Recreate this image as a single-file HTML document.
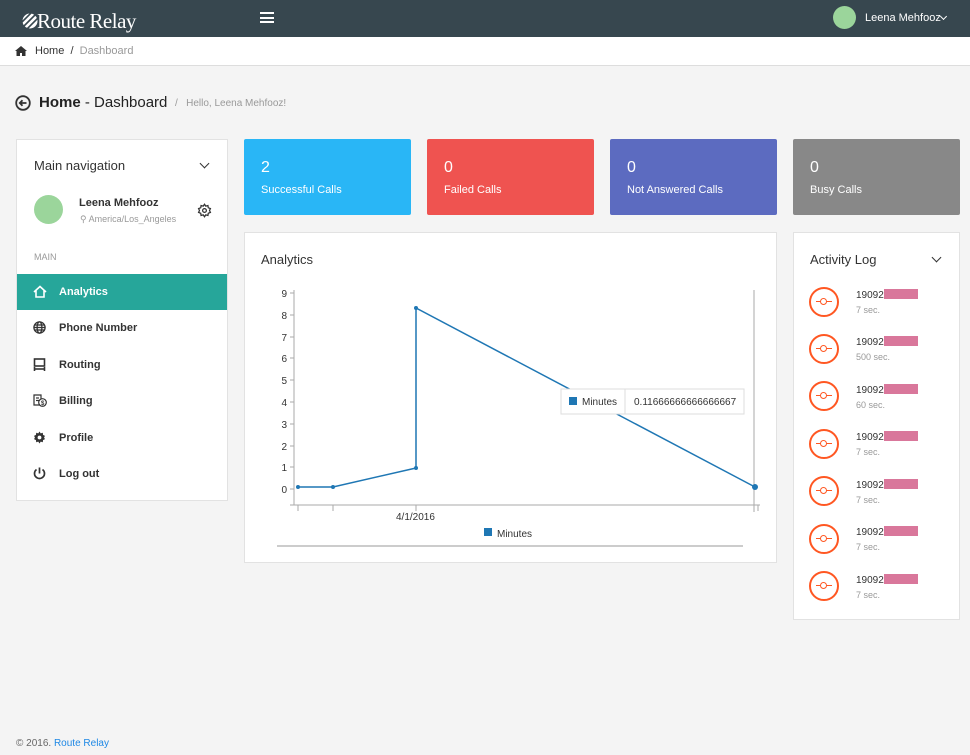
<!DOCTYPE html>
<html><head><meta charset="utf-8"><style>
*{box-sizing:border-box;margin:0;padding:0}
body{width:970px;height:755px;background:#f4f4f4;font-family:"Liberation Sans",sans-serif;position:relative;overflow:hidden;color:#333}
.a{position:absolute}
.top{left:0;top:0;width:970px;height:37px;background:#37474f}
.bc{left:0;top:37px;width:970px;height:29px;background:#fff;border-bottom:1px solid #ddd;font-size:11px}
.card{background:#fff;border:1px solid #e2e2e2}
.stat{color:#fff;border-radius:2px}
.stat .n{position:absolute;left:17px;top:20px;font-size:16px}
.stat .l{position:absolute;left:17px;top:45px;font-size:11px}
.nav{font-size:11px;font-weight:bold;color:#333}
.item{position:absolute;left:0;width:210px;height:36px;line-height:36px;padding-left:42px}
.ic{position:absolute;left:16px;top:11px}
.act .c{position:absolute;left:15px;width:30px;height:30px;border:2px solid #ff5722;border-radius:50%}
.act .c:before{content:"";position:absolute;left:5px;top:11.5px;width:16px;height:1.5px;background:#ff5722}
.act .c:after{content:"";position:absolute;left:9px;top:8.5px;width:5px;height:5px;border:1.5px solid #ff5722;border-radius:50%;background:#fff}
.chev{position:absolute;width:7px;height:7px;border-right:1.6px solid #333;border-bottom:1.6px solid #333;transform:rotate(45deg)}
</style></head><body>
<div class="a top">
 <svg class="a" style="left:22px;top:13px" width="16" height="16" viewBox="0 0 16 16"><circle cx="8" cy="8" r="7.5" fill="#fff"/><g stroke="#37474f" stroke-width="1.6"><line x1="0" y1="9" x2="9" y2="0"/><line x1="2" y1="13" x2="13" y2="2"/><line x1="5" y1="16" x2="16" y2="5"/></g></svg>
 <div class="a" style="left:37px;top:9px;color:#fff;font-family:'Liberation Serif',serif;font-size:21px;letter-spacing:-0.5px">Route Relay</div>
 <div class="a" style="left:260px;top:12px;width:14px;height:11px;border-top:2px solid #fff;border-bottom:2px solid #fff"><div style="margin-top:2.5px;height:2px;background:#fff"></div></div>
 <div class="a" style="left:833px;top:6px;width:23px;height:23px;border-radius:50%;background:#9bd59b"></div>
 <div class="a" style="left:865px;top:12px;color:#fff;font-size:11px">Leena Mehfooz</div>
 <div class="chev" style="left:941px;top:14px;width:5px;height:5px;border-color:#fff"></div>
</div>
<div class="a bc">
 <svg class="a" style="left:15px;top:9px" width="12" height="10" viewBox="0 0 12 10"><path d="M6 0L0 5h1.5v5h3.5V7h2v3h3.5V5H12z" fill="#333"/></svg>
 <span class="a" style="left:35px;top:8px">Home &nbsp;/ &nbsp;<span style="color:#999">Dashboard</span></span></div>
<svg class="a" style="left:15px;top:95px" width="16" height="16" viewBox="0 0 16 16"><circle cx="8" cy="8" r="6.8" fill="none" stroke="#333" stroke-width="1.8"/><path d="M11.5 8H5M7.5 5.2L4.8 8l2.7 2.8" fill="none" stroke="#333" stroke-width="1.8"/></svg>
<div class="a" style="left:39px;top:94px;font-size:15px;color:#222"><span style="font-weight:bold">Home</span> - Dashboard</div>
<div class="a" style="left:175px;top:98px;font-size:10px;color:#999">/ &nbsp;&nbsp;Hello, Leena Mehfooz!</div>

<div class="a card" style="left:16px;top:139px;width:212px;height:362px">
 <div class="a" style="left:17px;top:18px;font-size:13px">Main navigation</div>
 <div class="chev" style="left:184px;top:20px"></div>
 <div class="a" style="left:17px;top:55px;width:29px;height:29px;border-radius:50%;background:#9bd59b"></div>
 <div class="a" style="left:62px;top:57px;font-size:11px;font-weight:bold">Leena Mehfooz</div>
 <div class="a" style="left:63px;top:74px;font-size:9px;color:#999">⚲ America/Los_Angeles</div>
 <svg class="a" style="left:180px;top:63px" width="15" height="15" viewBox="0 0 24 24"><path d="M12 2l2 3 3.5-1 .5 3.5 3.5 1.5-1.5 3 1.5 3-3.5 1.5-.5 3.5-3.5-1-2 3-2-3-3.5 1-.5-3.5L2.5 15 4 12 2.5 9 6 7.5 6.5 4 10 5z" fill="none" stroke="#333" stroke-width="2"/><circle cx="12" cy="12" r="3" fill="none" stroke="#333" stroke-width="2"/></svg>
 <div class="a" style="left:17px;top:112px;font-size:9px;color:#999">MAIN</div>
 <div class="nav">
  <div class="item" style="top:134px;background:#26a69a;color:#fff">Analytics<svg class="ic" width="14" height="13" viewBox="0 0 14 13"><path d="M1 7L7 1.5 13 7M3 5.5V12h8V5.5" fill="none" stroke="#fff" stroke-width="1.6"/></svg></div>
  <div class="item" style="top:170px">Phone Number<svg class="ic" width="13" height="13" viewBox="0 0 13 13"><g fill="none" stroke="#333" stroke-width="1.3"><circle cx="6.5" cy="6.5" r="5.6"/><ellipse cx="6.5" cy="6.5" rx="2.4" ry="5.6"/><line x1="1" y1="6.5" x2="12" y2="6.5"/><line x1="1.8" y1="4" x2="11.2" y2="4"/><line x1="1.8" y1="9" x2="11.2" y2="9"/></g></svg></div>
  <div class="item" style="top:207px">Routing<svg class="ic" width="13" height="13" viewBox="0 0 13 13"><g fill="none" stroke="#333" stroke-width="1.6"><rect x="1.5" y="1" width="10" height="7"/><line x1="1" y1="11" x2="12" y2="11"/><line x1="1.5" y1="9" x2="1.5" y2="13"/><line x1="11.5" y1="9" x2="11.5" y2="13"/></g></svg></div>
  <div class="item" style="top:243px">Billing<svg class="ic" width="14" height="13" viewBox="0 0 14 13"><g fill="none" stroke="#333" stroke-width="1.2"><path d="M1 1h7v10H1z"/><line x1="3" y1="4" x2="6" y2="4"/><line x1="3" y1="6.5" x2="6" y2="6.5"/><circle cx="9.5" cy="8.5" r="3.8" fill="#fff"/></g><text x="8" y="11" font-size="6" font-weight="bold" fill="#333">$</text></svg></div>
  <div class="item" style="top:280px">Profile<svg class="ic" width="13" height="13" viewBox="0 0 24 24"><path d="M12 1l2.2 3.3 3.9-1.1.4 4 3.6 1.7-1.7 3.1 1.7 3.1-3.6 1.7-.4 4-3.9-1.1L12 23l-2.2-3.3-3.9 1.1-.4-4L1.9 15.1 3.6 12 1.9 8.9l3.6-1.7.4-4 3.9 1.1z" fill="#333"/><circle cx="12" cy="12" r="3.5" fill="#fff"/></svg></div>
  <div class="item" style="top:316px">Log out<svg class="ic" width="13" height="13" viewBox="0 0 13 13"><path d="M6.5 0.5v6M3.5 2.5a5 5 0 1 0 6 0" fill="none" stroke="#333" stroke-width="1.7"/></svg></div>
 </div>
</div>

<div class="a stat" style="left:244px;top:139px;width:167px;height:76px;background:#29b6f6"><div class="n">2</div><div class="l">Successful Calls</div></div>
<div class="a stat" style="left:427px;top:139px;width:167px;height:76px;background:#ef5350"><div class="n">0</div><div class="l">Failed Calls</div></div>
<div class="a stat" style="left:610px;top:139px;width:167px;height:76px;background:#5c6bc0"><div class="n">0</div><div class="l">Not Answered Calls</div></div>
<div class="a stat" style="left:793px;top:139px;width:167px;height:76px;background:#888"><div class="n">0</div><div class="l">Busy Calls</div></div>

<div class="a card" style="left:244px;top:232px;width:533px;height:331px">
 <div class="a" style="left:16px;top:19px;font-size:13px">Analytics</div>
</div>
<svg class="a" style="left:0;top:0" width="970" height="600" font-family="Liberation Sans" font-size="10" fill="#333">
 <line x1="294" y1="290" x2="294" y2="505" stroke="#aaa"/>
 <line x1="290" y1="505" x2="760" y2="505" stroke="#aaa"/>
 <line x1="754" y1="290" x2="754" y2="512" stroke="#aaa"/>
 <g stroke="#aaa"><line x1="290" y1="293" x2="294" y2="293"/><line x1="290" y1="315" x2="294" y2="315"/><line x1="290" y1="337" x2="294" y2="337"/><line x1="290" y1="358" x2="294" y2="358"/><line x1="290" y1="380" x2="294" y2="380"/><line x1="290" y1="402" x2="294" y2="402"/><line x1="290" y1="424" x2="294" y2="424"/><line x1="290" y1="446" x2="294" y2="446"/><line x1="290" y1="467" x2="294" y2="467"/><line x1="290" y1="489" x2="294" y2="489"/>
 <line x1="298" y1="505" x2="298" y2="511"/><line x1="333" y1="505" x2="333" y2="511"/><line x1="416" y1="505" x2="416" y2="511"/><line x1="758" y1="505" x2="758" y2="511"/></g>
 <g text-anchor="end"><text x="287" y="297">9</text><text x="287" y="319">8</text><text x="287" y="341">7</text><text x="287" y="362">6</text><text x="287" y="384">5</text><text x="287" y="406">4</text><text x="287" y="428">3</text><text x="287" y="450">2</text><text x="287" y="471">1</text><text x="287" y="493">0</text></g>
 <text x="396" y="520">4/1/2016</text>
 <polyline points="298,487 333,487 416,468 416,308 755,487" fill="none" stroke="#1f77b4" stroke-width="1.5"/>
 <g fill="#1f77b4"><circle cx="298" cy="487" r="2"/><circle cx="333" cy="487" r="2"/><circle cx="416" cy="468" r="2"/><circle cx="416" cy="308" r="2"/><circle cx="755" cy="487" r="3"/></g>
 <rect x="561" y="389" width="183" height="25" fill="#fff" stroke="#ddd"/>
 <line x1="625" y1="389" x2="625" y2="414" stroke="#ddd"/>
 <rect x="569" y="397" width="8" height="8" fill="#1f77b4"/>
 <text x="582" y="405">Minutes</text><text x="634" y="405">0.11666666666666667</text>
 <rect x="484" y="528" width="8" height="8" fill="#1f77b4"/>
 <text x="497" y="537">Minutes</text>
 <line x1="277" y1="546" x2="743" y2="546" stroke="#bbb" stroke-width="1.5"/>
</svg>

<div class="a card act" style="left:793px;top:232px;width:167px;height:388px">
 <div class="a" style="left:16px;top:19px;font-size:13px">Activity Log</div>
 <div class="chev" style="left:139px;top:21px"></div>
 <div class="c" style="top:54px"></div><div class="a" style="left:62px;top:56px;font-size:10px">19092<span style="display:inline-block;width:34px;height:10px;background:#d9779b;vertical-align:-1px"></span></div><div class="a" style="left:62px;top:72px;font-size:9px;color:#999">7 sec.</div>
 <div class="c" style="top:101px"></div><div class="a" style="left:62px;top:103px;font-size:10px">19092<span style="display:inline-block;width:34px;height:10px;background:#d9779b;vertical-align:-1px"></span></div><div class="a" style="left:62px;top:119px;font-size:9px;color:#999">500 sec.</div>
 <div class="c" style="top:148px"></div><div class="a" style="left:62px;top:151px;font-size:10px">19092<span style="display:inline-block;width:34px;height:10px;background:#d9779b;vertical-align:-1px"></span></div><div class="a" style="left:62px;top:167px;font-size:9px;color:#999">60 sec.</div>
 <div class="c" style="top:196px"></div><div class="a" style="left:62px;top:198px;font-size:10px">19092<span style="display:inline-block;width:34px;height:10px;background:#d9779b;vertical-align:-1px"></span></div><div class="a" style="left:62px;top:214px;font-size:9px;color:#999">7 sec.</div>
 <div class="c" style="top:243px"></div><div class="a" style="left:62px;top:246px;font-size:10px">19092<span style="display:inline-block;width:34px;height:10px;background:#d9779b;vertical-align:-1px"></span></div><div class="a" style="left:62px;top:262px;font-size:9px;color:#999">7 sec.</div>
 <div class="c" style="top:291px"></div><div class="a" style="left:62px;top:293px;font-size:10px">19092<span style="display:inline-block;width:34px;height:10px;background:#d9779b;vertical-align:-1px"></span></div><div class="a" style="left:62px;top:309px;font-size:9px;color:#999">7 sec.</div>
 <div class="c" style="top:338px"></div><div class="a" style="left:62px;top:341px;font-size:10px">19092<span style="display:inline-block;width:34px;height:10px;background:#d9779b;vertical-align:-1px"></span></div><div class="a" style="left:62px;top:357px;font-size:9px;color:#999">7 sec.</div>
</div>

<div class="a" style="left:16px;top:738px;font-size:10px;color:#666">© 2016. <span style="color:#1e88e5">Route Relay</span></div>
</body></html>
